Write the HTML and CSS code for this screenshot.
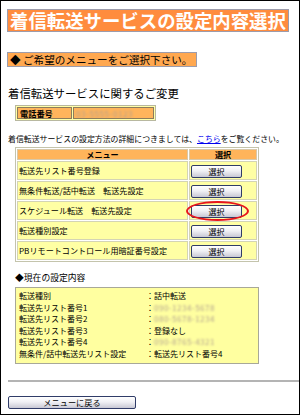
FILE: index.html
```html
<!DOCTYPE html>
<html lang="ja">

<head>
  <meta charset="utf-8">
  <link rel="stylesheet" href="styles.css">
</head>

<body>
  <div class="frame">
    <h1 class="page-title">着信転送サービスの設定内容選択</h1>

    <p class="lead">◆ ご希望のメニューをご選択下さい。</p>

    <h2 class="section-title">着信転送サービスに関するご変更</h2>

    <table class="tel-table">
      <tr>
        <th>電話番号</th>
        <td><span class="masked">03-5555-0123</span></td>
      </tr>
    </table>

    <p class="note">着信転送サービスの設定方法の詳細につきましては、<a href="#">こちら</a>をご覧ください。</p>

    <table class="menu-table">
      <tr>
        <th class="col-menu">メニュー</th>
        <th class="col-select">選択</th>
      </tr>
      <tr>
        <td>転送先リスト番号登録</td>
        <td><button class="select-btn">選択</button></td>
      </tr>
      <tr>
        <td>無条件転送/話中転送　転送先設定</td>
        <td><button class="select-btn">選択</button></td>
      </tr>
      <tr>
        <td>スケジュール転送　転送先設定</td>
        <td>
          <div class="marked">
            <button class="select-btn">選択</button>
            <span class="ring"></span>
          </div>
        </td>
      </tr>
      <tr>
        <td>転送種別設定</td>
        <td><button class="select-btn">選択</button></td>
      </tr>
      <tr>
        <td>PBリモートコントロール用暗証番号設定</td>
        <td><button class="select-btn">選択</button></td>
      </tr>
    </table>

    <p class="current-title">◆現在の設定内容</p>

    <div class="current-box">
      <div class="current-row"><span>転送種別</span><span>：話中転送</span></div>
      <div class="current-row"><span>転送先リスト番号1</span><span>：<span class="masked">090-1234-5678</span></span></div>
      <div class="current-row"><span>転送先リスト番号2</span><span>：<span class="masked">080-5678-1234</span></span></div>
      <div class="current-row"><span>転送先リスト番号3</span><span>：登録なし</span></div>
      <div class="current-row"><span>転送先リスト番号4</span><span>：<span class="masked">090-8765-4321</span></span></div>
      <div class="current-row"><span>無条件/話中転送先リスト設定</span><span>：転送先リスト番号4</span></div>
    </div>

    <hr class="divider">

    <button class="back-btn">メニューに戻る</button>
  </div>
</body>

</html>
```

FILE: styles.css
```css
body {
  margin: 0;
  background: #fff;
  font-family: "Noto Sans CJK JP", "Noto Sans", sans-serif;
  color: #000;
}

.frame {
  width: 300px;
  height: 415px;
  box-sizing: border-box;
  border: 1px solid #000;
  padding: 8px 0 0 6px;
  overflow: hidden;
}

.page-title {
  display: inline-block;
  margin: 0;
  padding: 0 2px 0 2px;
  border: 1px solid #9c9cac;
  background: #ff8c3e;
  color: #fff;
  font-size: 18.4px;
  font-weight: bold;
  line-height: 21px;
  white-space: nowrap;
}

.lead {
  width: fit-content;
  margin: 19px 0 0;
  padding: 0 4px 0 2px;
  border: 1px solid #9c9cac;
  background: #ffa850;
  font-size: 10.6px;
  line-height: 13px;
  white-space: nowrap;
}

.section-title {
  margin: 19px 0 0 1px;
  font-size: 11.4px;
  font-weight: normal;
  line-height: 14px;
}

.tel-table {
  margin: 5px 0 0 8px;
  border: 1px solid #b8b8a0;
  border-spacing: 1px;
  background: #ffffa8;
  font-size: 8.2px;
}

.tel-table th,
.tel-table td {
  height: 10px;
  padding: 0 2px;
  border: 1px solid #8c7c5c;
  background: #ffb45c;
  text-align: left;
  line-height: 10px;
}

.tel-table th {
  width: 49px;
  font-weight: bold;
}

.tel-table td {
  width: 75px;
}

.masked {
  color: #b0a090;
  filter: blur(0.9px);
  letter-spacing: 0.5px;
}

.note {
  margin: 12px 0 0 1px;
  font-size: 7.9px;
  line-height: 11px;
  white-space: nowrap;
}

.note a {
  color: #0000ee;
}

.menu-table {
  margin: 3px 0 0 8px;
  width: 244px;
  border: 1px solid #c4c4ac;
  border-spacing: 1px;
  background: #fff;
  font-size: 8.1px;
}

.menu-table th {
  height: 9px;
  padding: 0;
  border: 1px solid #d8c8a8;
  background: #ffb45a;
  font-weight: bold;
  line-height: 9px;
}

.menu-table td {
  height: 16px;
  padding: 1px 1px 0;
  border: 1px solid #d4d4b4;
  background: #ffffa4;
  line-height: 10px;
  white-space: nowrap;
}

.menu-table .col-select {
  width: 66px;
}

.select-btn {
  display: block;
  width: 51px;
  height: 13px;
  margin: 0;
  padding: 0;
  border: 1px solid #303c68;
  border-radius: 2px;
  background: linear-gradient(#ffffff, #f0f0f4 45%, #c8c8d4);
  font-family: inherit;
  font-size: 8px;
  line-height: 11px;
  color: #000;
}

.marked {
  position: relative;
}

.ring {
  position: absolute;
  left: -5px;
  top: -4px;
  width: 59px;
  height: 16px;
  border: 2px solid #e8141c;
  border-radius: 50%;
}

.current-title {
  margin: 10px 0 0 8px;
  font-size: 8.8px;
  line-height: 11px;
}

.current-box {
  width: 236px;
  margin: 4px 0 0 8px;
  padding: 2px 3px 3px;
  border: 1px solid #a8a898;
  background: #ffffa0;
  font-size: 8px;
  line-height: 11.6px;
}

.current-row {
  display: grid;
  grid-template-columns: 127px auto;
  white-space: nowrap;
}

.divider {
  margin: 16px 0 0 1px;
  height: 0;
  border: 0;
  border-top: 2px solid #b4b4b4;
}

.back-btn {
  display: block;
  width: 128px;
  height: 13px;
  margin: 14px 0 0 1px;
  padding: 0;
  border: 1px solid #303c68;
  border-radius: 2px;
  background: linear-gradient(#ffffff, #f0f0f4 45%, #c8c8d4);
  font-family: inherit;
  font-size: 8.2px;
  line-height: 11px;
  color: #000;
}
```
